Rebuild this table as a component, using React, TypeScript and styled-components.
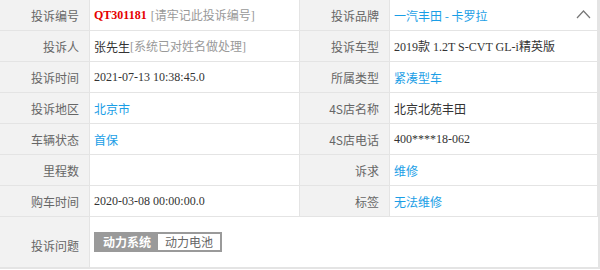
import { FC, ReactNode } from "react";
import { styled, createGlobalStyle } from "styled-components";

const GlobalStyle = createGlobalStyle`
  body {
    margin: 0;
    background: #fff;
    font-family: "Liberation Serif", "Noto Sans CJK SC", serif;
  }
`;

const Table = styled.div`
  width: 600px;
  display: grid;
  grid-template-columns: 90px 210px 90px 1fr;
  grid-template-rows: repeat(7, 31px) 52px;
  font-size: 12px;
  border-right: 2px solid #e4e4e4;
  box-sizing: border-box;
`;

const Label = styled.div<{ $tall?: boolean }>`
  display: flex;
  align-items: center;
  justify-content: flex-end;
  padding-right: 10px;
  background: #f2f2f2;
  color: #666;
  border-right: 1px solid #e4e4e4;
  border-bottom: ${({ $tall }) => ($tall ? "2px" : "1px")} solid #e4e4e4;
  font-family: "Noto Sans CJK SC", sans-serif;
  ${({ $tall }) => $tall && "padding-top: 6px;"}
  box-sizing: border-box;
`;

const Value = styled.div<{ $wide?: boolean; $tall?: boolean }>`
  position: relative;
  display: flex;
  align-items: center;
  padding-left: 4px;
  color: #333;
  border-right: ${({ $wide }) => ($wide ? "none" : "1px solid #e4e4e4")};
  border-bottom: ${({ $tall }) => ($tall ? "2px" : "1px")} solid #e4e4e4;
  ${({ $wide }) => $wide && "grid-column: span 3;"}
  box-sizing: border-box;
  white-space: nowrap;
`;

const Code = styled.b`
  color: #e60000;
  margin-right: 4px;
`;

const Hint = styled.span`
  color: #999;
  font-family: "Liberation Serif", "Noto Sans CJK SC", serif;
`;

const Link = styled.span`
  color: #1a9ee6;
  font-family: "Noto Sans CJK SC", sans-serif;
`;

const Cjk = styled.span`
  font-family: "Noto Sans CJK SC", sans-serif;
`;

const Toggle = styled.svg`
  position: absolute;
  right: 6px;
  top: 9px;
`;

const Tags = styled.div`
  display: flex;
  border: 2px solid #9a9a9a;
`;

const Tag = styled.span<{ $active?: boolean }>`
  display: block;
  padding: 0 7px;
  height: 16px;
  line-height: 16px;
  font-family: "Noto Sans CJK SC", sans-serif;
  background: ${({ $active }) => ($active ? "#9a9a9a" : "#fff")};
  color: ${({ $active }) => ($active ? "#fff" : "#666")};
  font-weight: ${({ $active }) => ($active ? 700 : 400)};
`;

interface RowProps {
  label: string;
  children?: ReactNode;
}

const Cell: FC<RowProps> = ({ label, children }) => (
  <>
    <Label>{label}</Label>
    <Value>{children}</Value>
  </>
);

const App: FC = () => (
  <>
    <GlobalStyle />
    <Table>
      <Cell label="投诉编号">
        <Code>QT301181</Code>
        <Hint>[请牢记此投诉编号]</Hint>
      </Cell>
      <Label>投诉品牌</Label>
      <Value>
        <Link>一汽丰田 - 卡罗拉</Link>
        <Toggle width="15" height="10" viewBox="0 0 15 10">
          <path d="M1 9 L7.5 2 L14 9" fill="none" stroke="#777" strokeWidth="1.2" />
        </Toggle>
      </Value>

      <Cell label="投诉人">
        <Cjk>张先生</Cjk>
        <Hint>[系统已对姓名做处理]</Hint>
      </Cell>
      <Cell label="投诉车型">
        2019款 1.2T S-CVT GL-i精英版
      </Cell>

      <Cell label="投诉时间">2021-07-13 10:38:45.0</Cell>
      <Cell label="所属类型">
        <Link>紧凑型车</Link>
      </Cell>

      <Cell label="投诉地区">
        <Link>北京市</Link>
      </Cell>
      <Cell label="4S店名称">
        <Cjk>北京北苑丰田</Cjk>
      </Cell>

      <Cell label="车辆状态">
        <Link>首保</Link>
      </Cell>
      <Cell label="4S店电话">400****18-062</Cell>

      <Cell label="里程数" />
      <Cell label="诉求">
        <Link>维修</Link>
      </Cell>

      <Cell label="购车时间">2020-03-08 00:00:00.0</Cell>
      <Cell label="标签">
        <Link>无法维修</Link>
      </Cell>

      <Label $tall>投诉问题</Label>
      <Value $wide $tall>
        <Tags>
          <Tag $active>动力系统</Tag>
          <Tag>动力电池</Tag>
        </Tags>
      </Value>
    </Table>
  </>
);

export default App;
